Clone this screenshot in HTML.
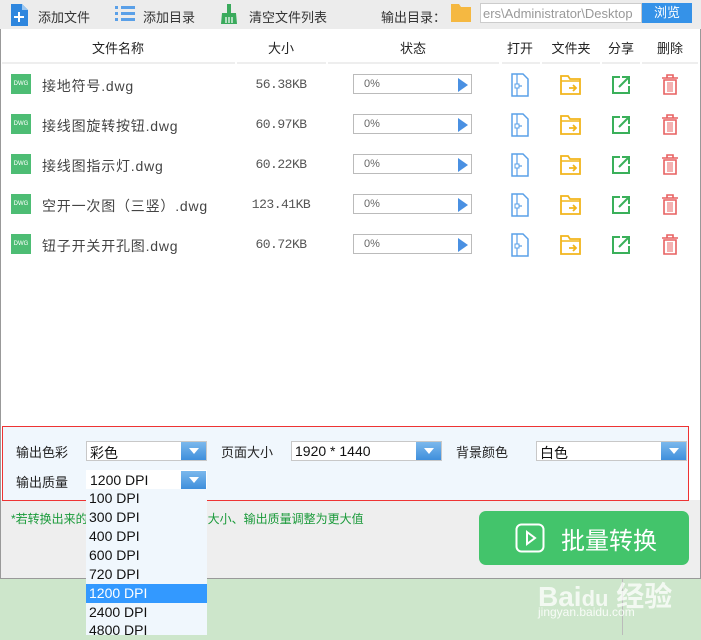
<!DOCTYPE html>
<html><head><meta charset="utf-8"><style>
*{margin:0;padding:0;box-sizing:border-box}
body{width:701px;height:635px;overflow:hidden;background:#cde6cb;font-family:"Liberation Sans","Noto Sans CJK SC",sans-serif;font-size:13px;color:#333;position:relative}
.abs{position:absolute}
#win{left:0;top:0;width:701px;height:579px;background:#fff;border-left:1px solid #999;border-right:1px solid #999;border-bottom:1px solid #999}
#tb{left:0;top:0;width:701px;height:29px;background:#ececec}
.hd{top:38px;font-size:13px;color:#222;transform:translateX(-50%)}
.row{height:40px;width:701px;left:0}
.fname{left:42px;font-size:14px;color:#444;top:11px;letter-spacing:0.8px}
.size{left:281px;transform:translateX(-50%);top:12px;font-size:13px;color:#555;font-family:"Liberation Mono","Noto Sans CJK SC",monospace;letter-spacing:-0.5px}
.prog{left:353px;top:9px;width:119px;height:20px;border:1px solid #bbb;background:#fff;font-size:11px;color:#666;padding:3px 0 0 10px}
.sel{height:20px;border:1px solid #c8c8c8;background:#fff;font-size:14px;padding:1px 0 0 3px;color:#111}
.sel i{position:absolute;right:0;top:0;width:25px;height:18px;background:linear-gradient(#7bb8ec,#3f8fdc)}
.sel i:after{content:"";position:absolute;left:8px;top:6px;border-left:5px solid transparent;border-right:5px solid transparent;border-top:6px solid #fff}
.lbl{font-size:13px;color:#222}
.dd{font-size:14px;color:#111;left:86px;width:121px;height:19px;padding-left:3px;line-height:19px}
</style></head><body>
<div id="win" class="abs"></div>
<div id="tb" class="abs"></div>
<svg class="abs" style="left:11px;top:4px" width="20" height="22"><path d="M0 0h11l6 6v16H0z" fill="#2e86de"/><path d="M11 0v6h6" fill="#9cc7f0"/><path d="M8 8v10M3 13h10" stroke="#fff" stroke-width="2"/></svg>
<div class="abs" style="left:38px;top:7px;font-size:13px">添加文件</div>
<svg class="abs" style="left:115px;top:6px" width="20" height="16" fill="#5aa0e8"><rect x="0" y="0" width="3" height="3"/><rect x="6" y="0" width="14" height="3"/><rect x="0" y="6" width="3" height="3"/><rect x="6" y="6" width="14" height="3"/><rect x="0" y="12" width="3" height="3"/><rect x="6" y="12" width="14" height="3"/></svg>
<div class="abs" style="left:143px;top:7px;font-size:13px">添加目录</div>
<svg class="abs" style="left:220px;top:4px" width="18" height="20"><rect x="7" y="0" width="4" height="9" fill="#3aaa5c"/><path d="M2 9h14l1 11H1z" fill="#3aaa5c"/><path d="M6 13v6M9 13v6M12 13v6" stroke="#fff" stroke-width="1.2"/></svg>
<div class="abs" style="left:249px;top:7px;font-size:13px">清空文件列表</div>
<div class="abs" style="left:381px;top:7px;font-size:13px">输出目录：</div>
<svg class="abs" style="left:451px;top:4px" width="20" height="18"><path d="M0 0h8l2 3h10v15H0z" fill="#f5b841"/></svg>
<div class="abs" style="left:480px;top:3px;width:162px;height:20px;border:1px solid #ccc;background:#fff;color:#999;font-size:13px;padding:2px 0 0 2px;overflow:hidden;white-space:nowrap">ers\Administrator\Desktop</div>
<div class="abs" style="left:642px;top:3px;width:50px;height:20px;background:#3592e8;color:#fff;font-size:13px;text-align:center;line-height:20px">浏览</div>
<div class="abs hd" style="left:118px">文件名称</div>
<div class="abs hd" style="left:281px">大小</div>
<div class="abs hd" style="left:413px">状态</div>
<div class="abs hd" style="left:520px">打开</div>
<div class="abs hd" style="left:571px">文件夹</div>
<div class="abs hd" style="left:621px">分享</div>
<div class="abs hd" style="left:670px">删除</div>
<div class="abs" style="left:2px;top:62px;width:233px;height:2px;background:#eee"></div>
<div class="abs" style="left:237px;top:62px;width:89px;height:2px;background:#eee"></div>
<div class="abs" style="left:328px;top:62px;width:171px;height:2px;background:#eee"></div>
<div class="abs" style="left:502px;top:62px;width:38px;height:2px;background:#eee"></div>
<div class="abs" style="left:542px;top:62px;width:58px;height:2px;background:#eee"></div>
<div class="abs" style="left:602px;top:62px;width:38px;height:2px;background:#eee"></div>
<div class="abs" style="left:642px;top:62px;width:56px;height:2px;background:#eee"></div>
<div id="rows"></div>
<script>
var d=[["接地符号.dwg","56.38KB"],["接线图旋转按钮.dwg","60.97KB"],["接线图指示灯.dwg","60.22KB"],["空开一次图（三竖）.dwg","123.41KB"],["钮子开关开孔图.dwg","60.72KB"]];
var h="";
d.forEach(function(r,i){var t=65+i*40;
h+='<div class="abs row" style="top:'+t+'px">'+
'<div class="abs" style="left:11px;top:9px;width:20px;height:20px;background:#4dbd74;color:#fff;font-size:6px;line-height:20px;text-align:center">DWG</div>'+
'<div class="abs fname">'+r[0]+'</div><div class="abs size">'+r[1]+'</div>'+
'<div class="abs prog">0%<span style="position:absolute;right:3px;top:3px;border-top:7px solid transparent;border-bottom:7px solid transparent;border-left:10px solid #4a90e2"></span></div>'+
'<svg class="abs" style="left:511px;top:8px" width="18" height="24"><path d="M1 1h11l5 5v17H1z" fill="none" stroke="#5aa0e8" stroke-width="1.5"/><path d="M6 1v22M6 13h5" stroke="#5aa0e8" stroke-width="1.2"/><rect x="4" y="11" width="4" height="4" fill="#fff" stroke="#5aa0e8"/></svg>'+
'<svg class="abs" style="left:560px;top:10px" width="22" height="20"><path d="M1 1h7l2 3h10v15H1z" fill="none" stroke="#f2b51c" stroke-width="1.8"/><path d="M1 6h19" stroke="#f2b51c" stroke-width="1.5"/><path d="M9 13h7M13 10l3 3-3 3" fill="none" stroke="#f2b51c" stroke-width="1.8"/></svg>'+
'<svg class="abs" style="left:611px;top:10px" width="20" height="20"><path d="M9 2H2v16h16v-7" fill="none" stroke="#3ab05a" stroke-width="2"/><path d="M8 12L18 2M11 2h7v7" fill="none" stroke="#3ab05a" stroke-width="2"/></svg>'+
'<svg class="abs" style="left:661px;top:9px" width="18" height="21"><path d="M1 4h16M6 4V1h6v3" fill="none" stroke="#e86060" stroke-width="1.6"/><path d="M3 6h12v14H3z" fill="none" stroke="#e86060" stroke-width="1.6"/><path d="M7 8v10M9 8v10M11 8v10" stroke="#e86060" stroke-width="1"/></svg>'+
'</div>';});
document.getElementById("rows").innerHTML=h;
</script>
<div class="abs" style="left:1px;top:500px;width:699px;height:78px;background:#eeeeee"></div>
<div class="abs" style="left:2px;top:426px;width:687px;height:75px;background:#f0f7fd;border:1px solid #ee3333"></div>
<div class="abs lbl" style="left:16px;top:442px">输出色彩</div>
<div class="abs sel" style="left:86px;top:441px;width:121px">彩色<i></i></div>
<div class="abs lbl" style="left:221px;top:442px">页面大小</div>
<div class="abs sel" style="left:291px;top:441px;width:151px">1920 * 1440<i></i></div>
<div class="abs lbl" style="left:456px;top:442px">背景颜色</div>
<div class="abs sel" style="left:536px;top:441px;width:151px">白色<i></i></div>
<div class="abs lbl" style="left:16px;top:472px">输出质量</div>
<div class="abs sel" style="left:86px;top:470px;width:121px;border-color:#fff">1200 DPI<i></i></div>
<div class="abs" style="left:11px;top:510px;font-size:12px;color:#1a9a3a">*若转换出来的图纸不清晰，可将页面大小、输出质量调整为更大值</div>
<div class="abs" style="left:479px;top:511px;width:210px;height:54px;background:#43c46b;border-radius:7px"></div>
<svg class="abs" style="left:515px;top:523px" width="30" height="30"><rect x="1.5" y="1.5" width="27" height="27" rx="5" fill="none" stroke="#fff" stroke-width="2"/><path d="M12 9l8 6-8 6z" fill="none" stroke="#fff" stroke-width="2"/></svg>
<div class="abs" style="left:561px;top:521px;font-size:24px;color:#fff">批量转换</div>
<div class="abs" style="left:622px;top:579px;width:1px;height:56px;background:#bbb"></div>
<div class="abs" style="left:538px;top:575px;font-size:28px;color:rgba(255,255,255,.75);font-weight:bold">Bai<span style="font-size:22px">du</span> 经验</div>
<div class="abs" style="left:538px;top:605px;font-size:12px;color:rgba(255,255,255,.85)">jingyan.baidu.com</div>
<div class="abs" style="left:86px;top:489px;width:121px;height:146px;background:#f0f7fd"></div>
<div class="abs dd" style="top:489px">100 DPI</div>
<div class="abs dd" style="top:508px">300 DPI</div>
<div class="abs dd" style="top:527px">400 DPI</div>
<div class="abs dd" style="top:546px">600 DPI</div>
<div class="abs dd" style="top:565px">720 DPI</div>
<div class="abs dd" style="top:584px;background:#3399ff;color:#fff">1200 DPI</div>
<div class="abs dd" style="top:603px">2400 DPI</div>
<div class="abs dd" style="top:621px">4800 DPI</div>
</body></html>
